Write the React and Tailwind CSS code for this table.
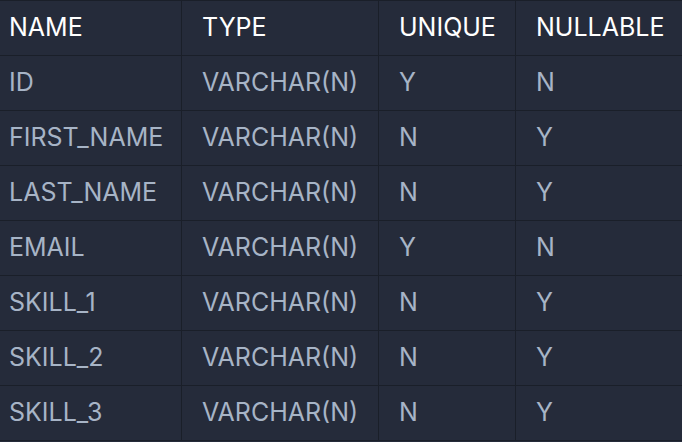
const rows = [
  ["ID", "VARCHAR(N)", "Y", "N"],
  ["FIRST_NAME", "VARCHAR(N)", "N", "Y"],
  ["LAST_NAME", "VARCHAR(N)", "N", "Y"],
  ["EMAIL", "VARCHAR(N)", "Y", "N"],
  ["SKILL_1", "VARCHAR(N)", "N", "Y"],
  ["SKILL_2", "VARCHAR(N)", "N", "Y"],
  ["SKILL_3", "VARCHAR(N)", "N", "Y"],
];

const headers = ["NAME", "TYPE", "UNIQUE", "NULLABLE"];

function Row({ cells, head }) {
  return (
    <div
      className={`grid grid-cols-[181px_197px_137px_1fr] h-[55px] border-b border-[#1a1f29] ${
        head ? "text-white" : "text-[#a7b4c6]"
      }`}
    >
      {cells.map((c, i) => (
        <div
          key={i}
          className={`flex items-center ${
            i === 0 ? "pl-[9px]" : "pl-[20px] border-l border-[#1a1f29]"
          }`}
        >
          {c}
        </div>
      ))}
    </div>
  );
}

export default function App() {
  return (
    <div
      className="w-[682px] h-[442px] bg-[#252b3a] border-t border-[#1a1f29] text-[25px] overflow-hidden"
      style={{ fontFamily: "Inter, 'Noto Sans', sans-serif" }}
    >
      <Row cells={headers} head />
      {rows.map((r, i) => (
        <Row key={i} cells={r} />
      ))}
    </div>
  );
}
